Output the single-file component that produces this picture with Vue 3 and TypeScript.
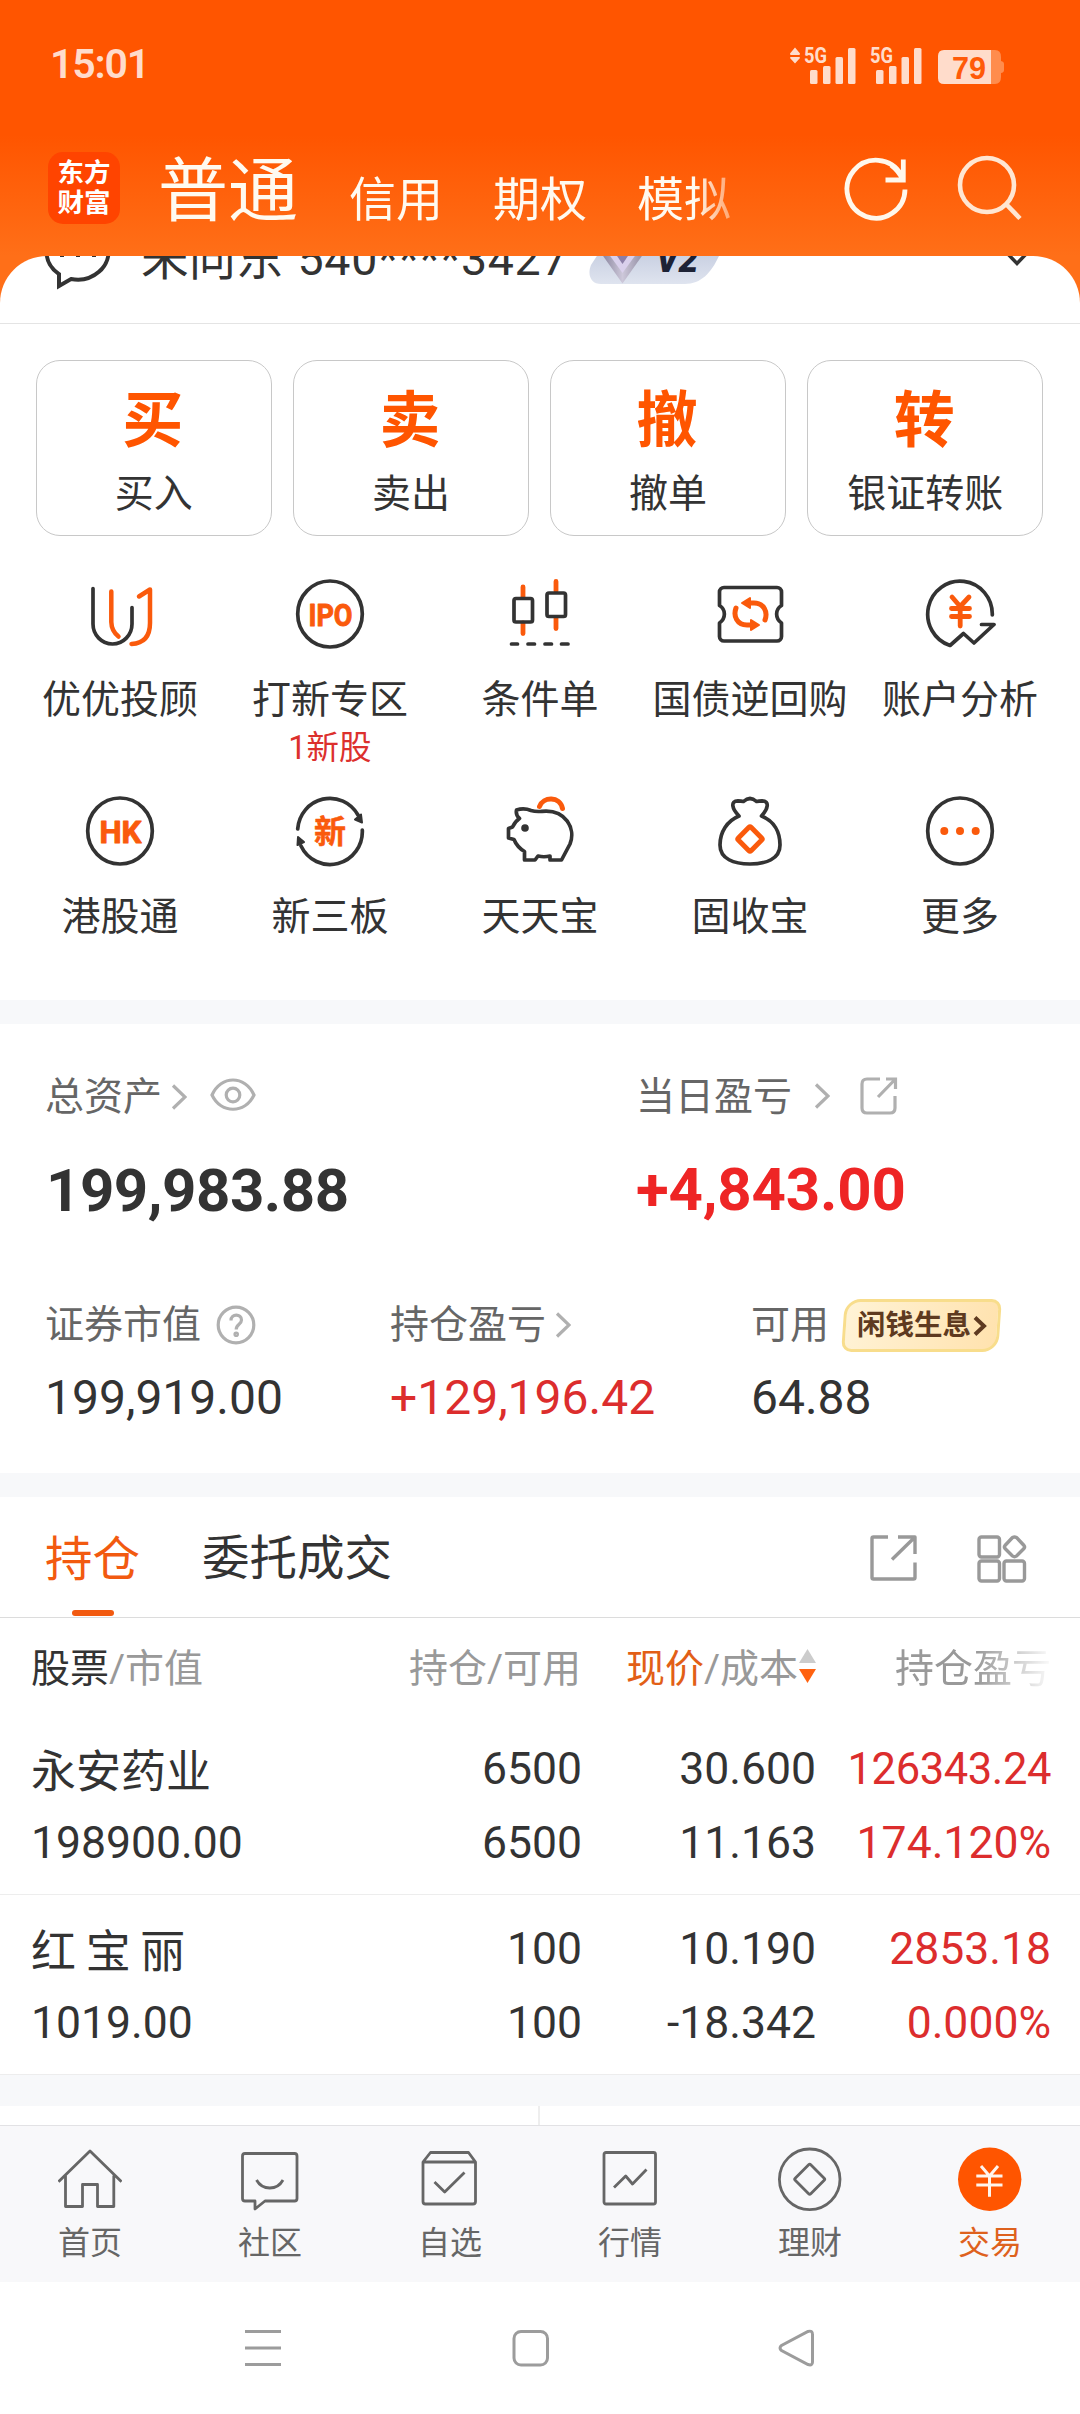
<script setup lang="ts">
interface Card { glyph: string; label: string }
interface Shortcut { icon: string; label: string; note?: string }
interface Holding {
  name: string
  value: string
  amount: string
  usable: string
  price: string
  cost: string
  profit: string
  rate: string
}
interface NavItem { icon: string; label: string; active?: boolean }

const accountTabs: string[] = ['信用', '期权', '模拟']

const cards: Card[] = [
  { glyph: '买', label: '买入' },
  { glyph: '卖', label: '卖出' },
  { glyph: '撤', label: '撤单' },
  { glyph: '转', label: '银证转账' },
]

const shortcutRows: Shortcut[][] = [
  [
    { icon: 'advisor', label: '优优投顾' },
    { icon: 'ipo', label: '打新专区', note: '1新股' },
    { icon: 'candle', label: '条件单' },
    { icon: 'repo', label: '国债逆回购' },
    { icon: 'analysis', label: '账户分析' },
  ],
  [
    { icon: 'hk', label: '港股通' },
    { icon: 'neeq', label: '新三板' },
    { icon: 'pig', label: '天天宝' },
    { icon: 'bag', label: '固收宝' },
    { icon: 'more', label: '更多' },
  ],
]

const holdings: Holding[] = [
  {
    name: '永安药业', value: '198900.00', amount: '6500', usable: '6500',
    price: '30.600', cost: '11.163', profit: '126343.24', rate: '174.120%',
  },
  {
    name: '红 宝 丽', value: '1019.00', amount: '100', usable: '100',
    price: '10.190', cost: '-18.342', profit: '2853.18', rate: '0.000%',
  },
]

const navItems: NavItem[] = [
  { icon: 'home', label: '首页' },
  { icon: 'chat', label: '社区' },
  { icon: 'watch', label: '自选' },
  { icon: 'market', label: '行情' },
  { icon: 'wealth', label: '理财' },
  { icon: 'trade', label: '交易', active: true },
]
</script>

<template>
  <div class="app">
    <div class="status">
      <span class="clock">15:01</span>
      <svg class="signals" width="220" height="42" viewBox="0 0 220 42">
        <g fill="#ffdccb">
          <path d="M1 10.500L6 4.500L11 10.500Q11 12 10 12H2Q1 12 1 10.500ZM1 15Q1 14 2 14H10Q11 14 11 15L6 20.500Z" />
          <text x="15" y="20" font-size="22" font-weight="700" textLength="23" lengthAdjust="spacingAndGlyphs">5G</text>
          <rect x="21" y="27" width="7.5" height="14" rx="1.5" />
          <rect x="34" y="23" width="7.5" height="18" rx="1.5" />
          <rect x="46.500" y="14" width="7.500" height="27" rx="1.5" />
          <rect x="59" y="5" width="7.500" height="36" rx="1.5" />
          <text x="81" y="20" font-size="22" font-weight="700" textLength="23" lengthAdjust="spacingAndGlyphs">5G</text>
          <rect x="87" y="27" width="7.5" height="14" rx="1.5" />
          <rect x="100" y="23" width="7.5" height="18" rx="1.5" />
          <rect x="112.500" y="14" width="7.500" height="27" rx="1.5" />
          <rect x="125" y="5" width="7.500" height="36" rx="1.5" />
          <path d="M155 7H202V41H155Q149 41 149 35V13Q149 7 155 7Z" />
        </g>
        <path d="M202 7H206Q212 7 212 14V18Q215 18.500 215 21V27Q215 29.500 212 30V34Q212 41 206 41H202Z" fill="#ff8c4d" />
        <text class="pct" x="163" y="35.500" font-size="31" font-weight="700" textLength="34" lengthAdjust="spacingAndGlyphs" fill="#ff5a08">79</text>
      </svg>
    </div>

    <div class="topbar">
      <div class="logo"><span>东方</span><span>财富</span></div>
      <span class="tab-main">普通</span>
      <div class="tabs">
        <span v-for="t in accountTabs" :key="t">{{ t }}</span>
      </div>
      <svg class="refresh" width="70" height="70" viewBox="0 0 70 70" fill="none" stroke="#fff8ec" stroke-width="4.800">
        <path d="M64 36.500A29 29 0 1 1 60 21.500" />
        <path d="M62.300 6.500V27H44.500M50 12Q58 18 62 27" />
      </svg>
      <svg class="search" width="70" height="70" viewBox="0 0 70 70" fill="none" stroke="#ffe6d2" stroke-width="4.600">
        <circle cx="34" cy="32" r="27" />
        <path d="M53 51L67 65.500" />
      </svg>
    </div>

    <main class="panel">
      <div class="account">
        <div class="account-inner">
          <svg width="70" height="74" viewBox="0 0 70 74" fill="none" stroke="#333" stroke-width="4">
            <path d="M15 52.100V64L27 57A31 28 0 1 0 15 52.100Z" />
            <path d="M18 32v3M34 32v3M50 32v3" />
          </svg>
          <span class="name">朱向东</span>
          <span class="number">540****3427</span>
          <svg class="vip" width="145" height="74" viewBox="0 0 145 74">
            <defs>
              <linearGradient id="vipBg" x1="0" y1="0" x2="0" y2="1">
                <stop offset="0.3" stop-color="#c9d0e2" />
                <stop offset="1" stop-color="#dfe4ef" />
              </linearGradient>
              <linearGradient id="gem" x1="0" y1="0" x2="1" y2="0">
                <stop offset="0" stop-color="#85809a" />
                <stop offset="0.500" stop-color="#cdc8da" />
                <stop offset="1" stop-color="#8f8aa0" />
              </linearGradient>
            </defs>
            <path d="M18 20H140L131 34C123 51 113 62 97 62H13C3 62-1 53 3 43Z" fill="url(#vipBg)" />
            <path d="M13 31H56L34.500 61.500Z" fill="url(#gem)" />
            <path d="M20 31H49L34.500 51Z" fill="#d9d0ec" />
            <path d="M27 31H42L34.500 42Z" fill="#8c7fa8" />
            <text x="68" y="50" font-size="36" font-weight="900" font-style="italic" fill="#1d2235" textLength="42" lengthAdjust="spacingAndGlyphs">V2</text>
          </svg>
          <svg class="drop" width="24" height="74" viewBox="0 0 24 74" fill="none" stroke="#333" stroke-width="3.500">
            <path d="M1 30L12 41.500L23 30" />
          </svg>
        </div>
      </div>

      <section class="cards">
        <div v-for="c in cards" :key="c.label" class="card">
          <b>{{ c.glyph }}</b>
          <span>{{ c.label }}</span>
        </div>
      </section>

      <section class="shortcuts">
        <div v-for="(row, r) in shortcutRows" :key="r" class="shortcut-row">
          <div v-for="s in row" :key="s.label" class="shortcut">
            <svg width="72" height="72" viewBox="0 0 72 72" fill="none" stroke="#333" stroke-width="3.700" stroke-linecap="round" stroke-linejoin="round">
              <template v-if="s.icon === 'advisor'">
                <path d="M9 10.500V46a19.500 20 0 0 0 39 0V29.500" />
                <path class="o" stroke-width="4.500" d="M27.300 13.500V44Q27.500 53 34.500 58.500M47.500 66Q66 65 66 45V11.500L55 18.500" />
              </template>
              <template v-else-if="s.icon === 'ipo'">
                <ellipse cx="36" cy="36" rx="32.300" ry="33" />
                <text class="badge-text" x="14.500" y="47.500" font-size="32" textLength="44" lengthAdjust="spacingAndGlyphs">IPO</text>
              </template>
              <template v-else-if="s.icon === 'candle'">
                <path class="o" stroke-width="4.800" d="M19 9V19M19 45V55.500M52 3.500V13M52 39.500V50.500" />
                <rect x="10" y="20.500" width="18.500" height="23.500" rx="2" />
                <rect x="43" y="15" width="18.500" height="23.500" rx="2" />
                <path d="M7.500 66H13.500M24 66H30.500M41 66H47.500M57.500 66H64" />
              </template>
              <template v-else-if="s.icon === 'repo'">
                <path d="M10 9.500H63A4.500 4.500 0 0 1 67.500 14V27.500C61 31.500 61 40.500 67.500 45V58.500A4.500 4.500 0 0 1 63 63H10A4.500 4.500 0 0 1 5.500 58.500V45C12 40.500 12 31.500 5.500 27.500V14A4.500 4.500 0 0 1 10 9.500Z" />
                <path class="o" stroke-width="5" d="M35 25H40C50 25 54 34 51 42M38 47H33C23 47 19 38 22 30" />
                <path class="f" d="M28 25L36 20V30ZM45 47L37 42V52Z" stroke-width="2" />
              </template>
              <template v-else-if="s.icon === 'analysis'">
                <path d="M68.300 37A32.300 33 0 1 0 26 67.500L39.500 55.500L50 65L70 46.500H57.500" />
                <path class="o" stroke-width="4.800" d="M28 19L36.200 28.500L45 19M27.500 30.500H45.500M27.500 38.500H45.500M36.200 29V48" />
              </template>
              <template v-else-if="s.icon === 'hk'">
                <ellipse cx="36" cy="36" rx="32.300" ry="33" />
                <text class="badge-text" x="15.500" y="47.500" font-size="32" textLength="42" lengthAdjust="spacingAndGlyphs">HK</text>
              </template>
              <template v-else-if="s.icon === 'neeq'">
                <path d="M3.700 34A32.300 33 0 0 1 64 20M68.300 35A32.300 33 0 0 1 7 51" />
                <path d="M61 24.500L67 19.500L68 27.500ZM4 42L10 47L3.500 50Z" fill="#333" stroke-width="2" />
                <text class="badge-text cjk" x="20" y="47.500" font-size="32">新</text>
              </template>
              <template v-else-if="s.icon === 'pig'">
                <path d="M12.500 15Q20 12.500 27 15.500Q32 17 38 16.300C62 14 72 34 66 49L57.500 65H46V61Q40 62.500 34 61L31 65H20.500V56.500Q13 52 10 44.500L4.500 43V33.500L8.500 32Q11 26.500 15.500 23.500Q11.500 20 12.500 15Z" />
                <circle cx="21" cy="33" r="3.800" fill="#333" stroke="none" />
                <path class="o" stroke-width="5" d="M35.500 11.500C39 1.500 56 1 58.500 13.500" stroke-linecap="round" />
              </template>
              <template v-else-if="s.icon === 'bag'">
                <path d="M25 21C18 14 16 6 24 5.800Q27 5.800 29.500 6.500Q36 0.500 42.500 6.500Q45 5.800 48 5.800C56 6 54 14 47.500 21C60 26 66 37 66 50C66 64 52 69 36 69S6 64 6 50C6 37 13 26 25 21Z" />
                <rect class="o" x="27" y="35" width="18" height="18" rx="1.500" stroke-width="5" transform="rotate(45 36 44)" />
              </template>
              <template v-else>
                <ellipse cx="36" cy="36" rx="32.300" ry="33" />
                <g fill="#fa5a0c" stroke="none"><circle cx="20.300" cy="36" r="4" /><circle cx="36" cy="36" r="4" /><circle cx="51.700" cy="36" r="4" /></g>
              </template>
            </svg>
            <span class="label">{{ s.label }}</span>
            <span v-if="s.note" class="note">{{ s.note }}</span>
          </div>
        </div>
      </section>

      <section class="assets">
        <div class="total">
          <div class="cell wide">
            <div class="caption">
              <span>总资产</span>
              <svg class="chev" width="16" height="28" viewBox="0 0 16 28"><path d="M2 2.500L14 14L2 25.500" /></svg>
              <svg class="eye" width="46" height="34" viewBox="0 0 46 34"><path d="M2 17C11-3 35-3 44 17C35 36 11 36 2 17Z" /><circle cx="23" cy="17" r="6.800" /></svg>
            </div>
            <strong>199,983.88</strong>
          </div>
          <div class="cell">
            <div class="caption">
              <span>当日盈亏</span>
              <svg class="chev far" width="16" height="28" viewBox="0 0 16 28"><path d="M2 2.500L14 14L2 25.500" /></svg>
              <svg class="ext" width="40" height="40" viewBox="0 0 40 40"><path d="M21 3H8Q3 3 3 8V32Q3 37 8 37H31Q36 37 36 32V20M27 3H36.500V13M36 3.500L19 21" /></svg>
            </div>
            <strong class="up">+4,843.00</strong>
          </div>
        </div>
        <div class="detail">
          <div class="cell c1">
            <div class="caption">
              <span>证券市值</span>
              <svg class="help" width="40" height="40" viewBox="0 0 40 40">
                <circle cx="20" cy="20" r="17.800" />
                <path d="M15 15.500C15 8.500 25.500 8.500 25.500 15C25.500 19.500 20.200 19 20.200 24.500" />
                <circle cx="20.200" cy="29.300" r="1.200" />
              </svg>
            </div>
            <em>199,919.00</em>
          </div>
          <div class="cell c2">
            <div class="caption">
              <span>持仓盈亏</span>
              <svg class="chev near" width="16" height="28" viewBox="0 0 16 28"><path d="M2 2.500L14 14L2 25.500" /></svg>
            </div>
            <em class="up">+129,196.42</em>
          </div>
          <div class="cell">
            <div class="caption">
              <span>可用</span>
              <div class="idle">
                <span>闲钱生息</span>
                <svg width="14" height="22" viewBox="0 0 14 22"><path d="M2 2.500L11 11L2 19.500" /></svg>
              </div>
            </div>
            <em>64.88</em>
          </div>
        </div>
      </section>

      <section class="positions">
        <div class="pos-tabs">
          <span class="active">持仓</span>
          <span>委托成交</span>
          <svg class="share" width="50" height="50" viewBox="0 0 50 50" fill="none" stroke="#999" stroke-width="3.400" stroke-linejoin="round">
            <path d="M20 3H5.500Q4 3 4 4.500V43.500Q4 45 5.500 45H45.500Q47 45 47 43.500V28.500M30 3H47V20M46 4L24 25.500" />
          </svg>
          <svg class="grid" width="52" height="50" viewBox="0 0 52 50" fill="none" stroke="#999" stroke-width="3.400" stroke-linejoin="round">
            <rect x="3" y="3" width="20.500" height="20" rx="2.500" />
            <rect x="3" y="27" width="20.500" height="20" rx="2.500" />
            <rect x="28" y="27" width="20.500" height="20" rx="2.500" />
            <path d="M36.500 3.500Q38.500 2.500 40.500 3.500L48 11.500Q49.200 13 48 14.500L40.500 22Q38.500 23.500 36.500 22L29 14.500Q27.800 13 29 11.500Z" />
          </svg>
        </div>
        <div class="line head">
          <span class="k1"><i>股票</i>/市值</span>
          <span class="k2">持仓/可用</span>
          <span class="k3"><i class="hot">现价</i>/成本<svg width="17" height="34" viewBox="0 0 17 34"><path d="M8.500 0L17 14H0Z" fill="#ccc" /><path d="M8.500 34L17 20H0Z" fill="#ff6210" /></svg></span>
          <span class="k4 fade">持仓盈亏</span>
        </div>
        <div v-for="h in holdings" :key="h.name" class="holding">
          <div class="line">
            <span class="k1 title">{{ h.name }}</span>
            <span class="k2">{{ h.amount }}</span>
            <span class="k3">{{ h.price }}</span>
            <span class="k4" :class="{ tight: h.profit.length > 8 }">{{ h.profit }}</span>
          </div>
          <div class="line">
            <span class="k1">{{ h.value }}</span>
            <span class="k2">{{ h.usable }}</span>
            <span class="k3">{{ h.cost }}</span>
            <span class="k4">{{ h.rate }}</span>
          </div>
        </div>
      </section>
      <div class="peek"><div></div><div></div></div>
    </main>

    <nav class="nav">
      <div v-for="n in navItems" :key="n.icon" class="nav-item" :class="{ on: n.active }">
        <svg width="64" height="64" viewBox="0 0 64 64" fill="none" stroke="#666" stroke-width="2.800" stroke-linejoin="round">
          <path v-if="n.icon === 'home'" d="M0.500 34.700L32 4L63.500 34.700M7.500 28.500V59.500H24.500V37.500H39.500V59.500H55.800V28.500" />
          <template v-else-if="n.icon === 'chat'">
            <path d="M7 6.500H56.500Q59 6.500 59 9V51.500Q59 54 56.500 54H27L17 62V54H7Q4.500 54 4.500 51.500V9Q4.500 6.500 7 6.500Z" />
            <path d="M18.500 33Q23 41 31.800 41T45 33" />
          </template>
          <template v-else-if="n.icon === 'watch'">
            <path d="M5 15L12.500 5.500H50.500L57.500 15V54.500Q57.500 57 55 57H7.500Q5 57 5 54.500ZM5 15H57.500" />
            <path d="M16.500 35L26.700 45L46.500 25.500" />
          </template>
          <template v-else-if="n.icon === 'market'">
            <rect x="6" y="5.500" width="51.500" height="51.500" rx="2" />
            <path d="M16 40.500L27.700 29L34.500 37L48.500 22.500" />
          </template>
          <template v-else-if="n.icon === 'wealth'">
            <circle cx="31.700" cy="32.300" r="30.300" />
            <rect x="20.700" y="21.300" width="22" height="22" rx="1.500" transform="rotate(45 31.700 32.300)" />
          </template>
          <template v-else>
            <circle cx="31.700" cy="32.300" r="31.700" fill="#ff5500" stroke="none" />
            <path d="M23 19L31.500 29L40 19M18.300 29H44.500M18.300 38H44.500M31.500 29V49.700" stroke="#fff4ec" stroke-width="3" />
          </template>
        </svg>
        <span>{{ n.label }}</span>
      </div>
    </nav>

    <div class="system">
      <svg width="40" height="40" viewBox="0 0 40 40"><path d="M2 3.500H38M2 20H38M2 36.500H38" /></svg>
      <svg width="40" height="40" viewBox="0 0 40 40"><rect x="4" y="3.500" width="33.500" height="33.500" rx="7" /></svg>
      <svg width="40" height="40" viewBox="0 0 40 40"><path d="M32 3.500Q36.500 2 36.500 6.500V34Q36.500 38 32 36.500L5.500 22.500Q2.500 20 5.500 17.500Z" /></svg>
    </div>
  </div>
</template>

<style>
body {
  margin: 0;
  background: #fff;
}
</style>

<style scoped>
.app {
  width: 1080px;
  height: 2414px;
  overflow: hidden;
  display: flex;
  flex-direction: column;
  font-family: Roboto, "Noto Sans CJK SC", sans-serif;
  color: #333;
  background: linear-gradient(#ff5500 0, #ff5500 135px, #ff6f18 256px, #ff6f18 310px) no-repeat top / 100% 310px #fff;
}
svg { display: block; flex: none; }
.status {
  height: 119px;
  padding: 8px 70px 0 50px;
  box-sizing: border-box;
  display: flex;
  align-items: center;
  justify-content: space-between;
}
.clock { font-size: 41px; font-weight: 600; letter-spacing: -1.200px; color: #ffdccb; }
.signals { margin-right: 1px; }
.pct { font-family: "Liberation Sans", sans-serif; }
.topbar {
  height: 137px;
  display: flex;
  align-items: center;
  padding-left: 48px;
}
.logo {
  width: 72px;
  height: 72px;
  border-radius: 15px;
  background: #ff4400;
  color: #fff;
  display: flex;
  flex-direction: column;
  align-items: center;
  justify-content: center;
  font: 700 26.500px/30px Roboto, "Noto Sans CJK SC", sans-serif;
}
.tab-main { margin-left: 38px; width: 140px; font-size: 70px; line-height: 80px; color: #fffaf0; white-space: nowrap; padding-top: 8px; }
.tabs {
  margin-left: 51px;
  width: 390px;
  display: flex;
  gap: 50px;
  font-size: 47px;
  line-height: 56px;
  padding-top: 25px;
  color: #fffaf0;
  white-space: nowrap;
  -webkit-mask-image: linear-gradient(90deg, #000 345px, transparent 410px);
  mask-image: linear-gradient(90deg, #000 345px, transparent 410px);
}
.refresh { margin: 1px 0 0 102px; }
.search { margin-left: 42px; }
.panel {
  height: 1869px;
  border-radius: 47px 47px 0 0;
  overflow: hidden;
  background: #fff;
}
.account { height: 67px; overflow: hidden; border-bottom: 1px solid #e4e4e4; }
.account-inner {
  height: 74px;
  margin-top: -34px;
  padding: 0 60px 0 44px;
  display: flex;
  align-items: center;
  line-height: 74px;
}
.name { margin-left: 27px; font-size: 47.500px; }
.number { margin-left: 14px; font-size: 46.500px; letter-spacing: 0.700px; }
.vip { margin-left: 20px; }
.drop { margin-left: auto; margin-right: -9px; }
.cards {
  display: flex;
  gap: 21.500px;
  padding: 36px 37px 0 36px;
}
.card {
  flex: 1;
  height: 176px;
  box-sizing: border-box;
  border: 1.500px solid #c8c8c8;
  border-radius: 24px;
  display: flex;
  flex-direction: column;
  align-items: center;
  padding-top: 27px;
}
.card b { font-size: 61px; line-height: 66px; margin-left: -2px; color: #ff5500; }
.card span { font-size: 39px; line-height: 50px; margin-top: 15px; }
.shortcuts { height: 464px; padding: 42px 15px 0; box-sizing: border-box; }
.shortcut-row { display: flex; height: 217px; }
.shortcut { width: 210px; display: flex; flex-direction: column; align-items: center; white-space: nowrap; }
.shortcut .label { font-size: 39px; line-height: 48px; margin-top: 26px; }
.shortcut .note { font-size: 32.500px; line-height: 40px; margin-top: 4px; color: #dc302d; }
.o { stroke: #fa5a0c; }
.f { fill: #fa5a0c; stroke: #fa5a0c; }
.badge-text { fill: #fa5a0c; stroke: #fa5a0c; stroke-width: 1px; font-weight: 700; }
.badge-text.cjk { stroke-width: 0.500px; }
.assets {
  height: 449px;
  border-top: 24px solid #f7f8fa;
  border-bottom: 24px solid #f7f8fa;
}
.cell { flex: none; }
.total { display: flex; padding: 45px 0 0 45px; }
.cell.wide { width: 591px; }
.caption { height: 56px; display: flex; align-items: center; font-size: 39px; line-height: 58px; color: #666; white-space: nowrap; }
.caption svg { fill: none; stroke: #b0b0b0; stroke-width: 3.200; }
.chev { margin-left: 9px; }
.chev.far { margin: -2px 0 0 22px; }
.chev.near { margin-left: 9px; }
.eye { margin: -4px 0 0 23px; }
.ext { margin: -3px 0 0 29px; }
.total strong { display: block; margin: 29px 0 0 1px; font-size: 60px; line-height: 74px; letter-spacing: -0.500px; }
.total strong.up { margin-left: 0; margin-top: 28px; letter-spacing: -0.200px; }
.detail { display: flex; padding: 69px 0 0 45px; }
.c1 { width: 345px; }
.c2 { width: 361px; }
.help { margin-left: 15px; }
.detail em { display: block; margin-top: 16px; font-style: normal; font-size: 48px; line-height: 58px; }
.up { color: #ee2525; }
.detail em.up { color: #dc2d2d; }
.idle {
  margin-left: 14px;
  width: 157px;
  height: 53px;
  box-sizing: border-box;
  border: 3px solid #f8dd8c;
  border-radius: 16px 10px 16px 10px;
  transform: skewX(-4deg);
  background: linear-gradient(100deg, #fff3d6, #ffe2ae);
  display: flex;
  align-items: center;
  padding-left: 11px;
  font-size: 28.500px;
  font-weight: 700;
  line-height: 48px;
  color: #5e3a20;
}
.idle span, .idle svg { transform: skewX(4deg); }
.idle svg { margin-left: 2px; stroke: #5e3a20; stroke-width: 4; }
.pos-tabs {
  height: 121px;
  box-sizing: border-box;
  border-bottom: 1px solid #dcdcdc;
  display: flex;
  align-items: center;
  padding: 4px 52px 0 45px;
  font-size: 47.500px;
  line-height: 118px;
}
.pos-tabs span { margin-right: 62px; }
.pos-tabs .active { color: #f25a10; display: flex; flex-direction: column; align-items: center; height: 116px; }
.pos-tabs .active::after { content: ""; width: 42px; height: 6px; border-radius: 3px; background: #f25a10; margin-top: -9px; }
.share { margin-left: auto; }
.grid { margin-left: 58px; }
.line { display: flex; align-items: center; height: 74px; font-size: 44.500px; white-space: nowrap; padding-left: 31px; }
.k1 { width: 250px; }
.k1.title { font-size: 45px; word-spacing: -1.500px; padding-bottom: 1px; }
.k2 { width: 301px; text-align: right; }
.k3 { width: 234px; text-align: right; }
.k4 { width: 235px; text-align: right; color: #dc2d2d; }
.k4.tight { font-size: 43.500px; letter-spacing: -0.400px; }
.head { height: 98px; box-sizing: border-box; padding-bottom: 4px; font-size: 39px; color: #999; }
.head i { font-style: normal; color: #333; }
.head i.hot { color: #e25f17; }
.head .k2 { width: 300px; }
.head .k3 { width: 235px; display: flex; justify-content: flex-end; align-items: center; }
.head .k3 svg { margin: 2px 0 0 1px; }
.head .fade {
  color: #999;
  -webkit-mask-image: linear-gradient(90deg, #000 160px, rgba(0, 0, 0, 0.080) 232px);
  mask-image: linear-gradient(90deg, #000 160px, rgba(0, 0, 0, 0.080) 232px);
}
.holding { height: 180px; box-sizing: border-box; padding-top: 17px; border-bottom: 1px solid #ededed; }
.holding:nth-of-type(3) { height: 179px; padding-top: 16px; }
.peek { height: 50px; display: flex; border-top: 31px solid #f7f8fa; box-sizing: border-box; }
.peek div:first-child { width: 538px; border-right: 2px solid #eee; }
.nav {
  flex: none;
  height: 157px;
  box-sizing: border-box;
  border-top: 1px solid #e2e2e5;
  background: #f8f8fa;
  display: flex;
}
.nav-item { width: 180px; padding-top: 21px; display: flex; flex-direction: column; align-items: center; color: #666; font-size: 32px; line-height: 44px; }
.nav-item span { margin-top: 10px; }
.nav-item.on { color: #de611d; }
.system { flex: 1; display: flex; align-items: center; padding: 0 264px 0 243px; justify-content: space-between; }
.system svg { fill: none; stroke: #9c9c9c; stroke-width: 3; }
</style>
